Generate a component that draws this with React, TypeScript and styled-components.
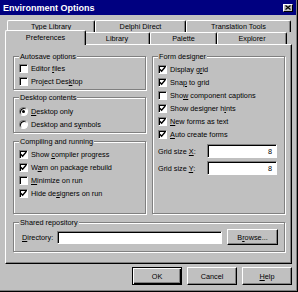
import React from 'react'
import styled, { createGlobalStyle } from 'styled-components'

const GlobalStyle = createGlobalStyle`
  html, body {
    margin: 0;
    padding: 0;
    background: #c0c0c0;
  }
  body {
    font-family: "Liberation Sans", Arial, sans-serif;
    font-size: 7.3px;
    color: #000;
  }
`

const Window = styled.div`
  width: 298px;
  height: 292px;
  box-sizing: border-box;
  background: #c0c0c0;
  border-right: 1px solid #000;
  border-bottom: 1px solid #000;
  box-shadow: inset -1px -1px #808080;
  display: flex;
  flex-direction: column;
`

const TitleBar = styled.div`
  height: 15px;
  margin-right: 1px;
  background: #000080;
  color: #fff;
  display: flex;
  align-items: center;
  justify-content: space-between;
  padding: 0 3px 0 3px;
  font-weight: bold;
  font-size: 9px;
`

const CloseButton = styled.div`
  width: 10px;
  height: 8px;
  box-sizing: border-box;
  background: #c0c0c0;
  border-top: 1px solid #fff;
  border-left: 1px solid #fff;
  border-right: 1px solid #000;
  border-bottom: 1px solid #000;
  display: flex;
  align-items: center;
  justify-content: center;
`

const Body = styled.div`
  padding: 5px 5px 0 5px;
  display: flex;
  flex-direction: column;
`

const Tabs = styled.div`
  height: 24px;
  display: flex;
  flex-direction: column;
`

const TabRow = styled.div`
  height: 12px;
  display: flex;
  align-items: flex-end;
  padding-left: 2px;
`

const Tab = styled.div<{ $w: number; $active?: boolean }>`
  width: ${p => p.$w}px;
  height: ${p => (p.$active ? 15 : 12)}px;
  margin: ${p => (p.$active ? '-2px -2px -1px -2px' : '0')};
  position: ${p => (p.$active ? 'relative' : 'static')};
  z-index: ${p => (p.$active ? 1 : 0)};
  box-sizing: border-box;
  background: #c0c0c0;
  border-top: 1px solid #fff;
  border-left: 1px solid #fff;
  border-right: 1px solid #000;
  border-radius: 2px 2px 0 0;
  box-shadow: inset -1px 0 #808080;
  display: flex;
  align-items: center;
  justify-content: center;
  padding-bottom: ${p => (p.$active ? 2 : 0)}px;
  white-space: nowrap;
`

const Panel = styled.div`
  height: 220px;
  box-sizing: border-box;
  border-top: 1px solid #fff;
  border-left: 1px solid #fff;
  border-right: 1px solid #000;
  border-bottom: 1px solid #000;
  box-shadow: inset -1px -1px #808080;
  padding: 11px 6px 0 7px;
`

const PanelGrid = styled.div`
  display: grid;
  grid-template-columns: 133px 133px;
  grid-template-rows: 158px 30px;
  column-gap: 6px;
  row-gap: 8px;
`

const Column = styled.div`
  display: flex;
  flex-direction: column;
`

const GroupBox = styled.div<{ $pt: number; $pb?: number; $grow?: boolean; $gap?: number; $span?: boolean }>`
  position: relative;
  box-sizing: border-box;
  border: 1px solid #808080;
  box-shadow: inset 1px 1px #fff, 1px 1px #fff;
  padding: ${p => p.$pt}px 5px ${p => p.$pb ?? 0}px 5px;
  margin-bottom: ${p => p.$gap ?? 0}px;
  flex: ${p => (p.$grow ? '1 1 auto' : '0 0 auto')};
  grid-column: ${p => (p.$span ? '1 / 3' : 'auto')};
  display: flex;
  flex-direction: column;
`

const GroupCaption = styled.span`
  position: absolute;
  top: -5px;
  left: 5px;
  padding: 0 1px;
  line-height: 9px;
  background: #c0c0c0;
  white-space: nowrap;
`

const Item = styled.div`
  height: 13px;
  display: flex;
  align-items: center;
  gap: 3px;
  white-space: nowrap;
`

const CheckBox = styled.div`
  width: 9px;
  height: 9px;
  box-sizing: border-box;
  background: #fff;
  border-top: 1px solid #808080;
  border-left: 1px solid #808080;
  border-right: 1px solid #fff;
  border-bottom: 1px solid #fff;
  box-shadow: inset 1px 1px #000;
  display: flex;
  align-items: center;
  justify-content: center;
  flex: 0 0 auto;
`

const RadioCircle = styled.div<{ $on?: boolean }>`
  width: 9px;
  height: 9px;
  box-sizing: border-box;
  border-radius: 50%;
  background: #fff;
  border: 1px solid;
  border-color: #808080 #fff #fff #808080;
  box-shadow: inset 1px 1px #000;
  display: flex;
  align-items: center;
  justify-content: center;
  flex: 0 0 auto;
  &::after {
    content: '';
    width: 3px;
    height: 3px;
    border-radius: 50%;
    background: ${p => (p.$on ? '#000' : 'transparent')};
  }
`

const FieldRow = styled.div<{ $mt: number }>`
  height: 14px;
  margin-top: ${p => p.$mt}px;
  display: flex;
  align-items: center;
  justify-content: space-between;
  padding-right: 2px;
  white-space: nowrap;
`

const Edit = styled.div<{ $w: number; $h: number }>`
  width: ${p => p.$w}px;
  height: ${p => p.$h}px;
  box-sizing: border-box;
  background: #fff;
  border-top: 1px solid #808080;
  border-left: 1px solid #808080;
  border-right: 1px solid #fff;
  border-bottom: 1px solid #fff;
  box-shadow: inset 1px 1px #000;
  display: flex;
  align-items: center;
  justify-content: flex-end;
  padding-right: 4px;
`

const RepoRow = styled.div`
  height: 16px;
  display: flex;
  align-items: center;
  padding-left: 3px;
  white-space: nowrap;
`

const RepoLabel = styled.span`
  width: 35px;
`

const Button = styled.div<{ $w: number; $h: number; $default?: boolean }>`
  width: ${p => p.$w}px;
  height: ${p => p.$h}px;
  box-sizing: border-box;
  background: #c0c0c0;
  border: 1px solid;
  border-color: ${p => (p.$default ? '#000' : '#fff #000 #000 #fff')};
  box-shadow: ${p =>
    p.$default
      ? 'inset 1px 1px #fff, inset -1px -1px #000, inset -2px -2px #808080'
      : 'inset -1px -1px #808080'};
  display: flex;
  align-items: center;
  justify-content: center;
  white-space: nowrap;
`

const ButtonBar = styled.div`
  margin-top: 3px;
  display: flex;
  justify-content: flex-end;
  gap: 5px;
`

function Caption({ text }: { text: string }) {
  const i = text.indexOf('&')
  if (i < 0) return <>{text}</>
  return (
    <>
      {text.slice(0, i)}
      <u>{text[i + 1]}</u>
      {text.slice(i + 2)}
    </>
  )
}

function Check({ text, on }: { text: string; on?: boolean }) {
  return (
    <Item>
      <CheckBox>
        {on && (
          <svg width="7" height="7" viewBox="0 0 7 7">
            <path d="M0.8 3.2 L2.6 5.2 L6.2 1" stroke="#000" strokeWidth="1.4" fill="none" />
          </svg>
        )}
      </CheckBox>
      <span><Caption text={text} /></span>
    </Item>
  )
}

function Radio({ text, on }: { text: string; on?: boolean }) {
  return (
    <Item>
      <RadioCircle $on={on} />
      <span><Caption text={text} /></span>
    </Item>
  )
}

export default function App() {
  return (
    <>
      <GlobalStyle />
      <Window>
        <TitleBar>
          <span>Environment Options</span>
          <CloseButton>
            <svg width="6" height="5" viewBox="0 0 6 5">
              <path d="M0.5 0.5 L5.5 4.5 M5.5 0.5 L0.5 4.5" stroke="#000" strokeWidth="1.2" />
            </svg>
          </CloseButton>
        </TitleBar>
        <Body>
          <Tabs>
            <TabRow>
              <Tab $w={88}>Type Library</Tab>
              <Tab $w={91}>Delphi Direct</Tab>
              <Tab $w={105}>Translation Tools</Tab>
            </TabRow>
            <TabRow>
              <Tab $w={81} $active>Preferences</Tab>
              <Tab $w={66}>Library</Tab>
              <Tab $w={67}>Palette</Tab>
              <Tab $w={70}>Explorer</Tab>
            </TabRow>
          </Tabs>
          <Panel>
            <PanelGrid>
              <Column>
                <GroupBox $pt={5} $pb={1} $gap={7}>
                  <GroupCaption>Autosave options</GroupCaption>
                  <Check text="Editor &files" />
                  <Check text="Project Des&ktop" />
                </GroupBox>
                <GroupBox $pt={7} $pb={1} $gap={8}>
                  <GroupCaption>Desktop contents</GroupCaption>
                  <Radio text="&Desktop only" on />
                  <Radio text="Desktop and s&ymbols" />
                </GroupBox>
                <GroupBox $pt={6} $grow>
                  <GroupCaption>Compiling and running</GroupCaption>
                  <Check text="Show &compiler progress" on />
                  <Check text="W&arn on package rebuild" on />
                  <Check text="&Minimize on run" />
                  <Check text="Hide de&signers on run" on />
                </GroupBox>
              </Column>
              <GroupBox $pt={6}>
                <GroupCaption>Form designer</GroupCaption>
                <Check text="Display g&rid" on />
                <Check text="Sna&p to grid" on />
                <Check text="Sho&w component captions" />
                <Check text="Show designer h&ints" on />
                <Check text="&New forms as text" on />
                <Check text="&Auto create forms" on />
                <FieldRow $mt={3}>
                  <span><Caption text="Grid size &X:" /></span>
                  <Edit $w={70} $h={14}>8</Edit>
                </FieldRow>
                <FieldRow $mt={3}>
                  <span><Caption text="Grid size &Y:" /></span>
                  <Edit $w={70} $h={14}>8</Edit>
                </FieldRow>
              </GroupBox>
              <GroupBox $pt={6} $span>
                <GroupCaption>Shared repository</GroupCaption>
                <RepoRow>
                  <RepoLabel><Caption text="&Directory:" /></RepoLabel>
                  <Edit $w={165} $h={13} />
                  <Button $w={51} $h={16} style={{ marginLeft: 5 }}>
                    <Caption text="B&rowse..." />
                  </Button>
                </RepoRow>
              </GroupBox>
            </PanelGrid>
          </Panel>
          <ButtonBar>
            <Button $w={50} $h={18} $default>OK</Button>
            <Button $w={50} $h={18}>Cancel</Button>
            <Button $w={50} $h={18}><Caption text="&Help" /></Button>
          </ButtonBar>
        </Body>
      </Window>
    </>
  )
}
